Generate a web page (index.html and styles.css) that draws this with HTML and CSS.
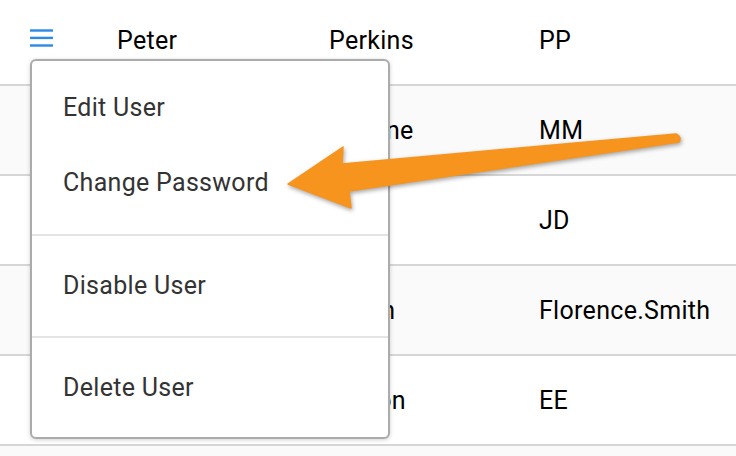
FILE: index.html
```html
<!DOCTYPE html>
<html>
<head>
<meta charset="utf-8">
<link rel="stylesheet" href="styles.css">
</head>
<body>
<div class="page">
  <div class="table">
    <div class="row">
      <div class="cell icon-cell">
        <svg class="hamburger" width="23" height="20" viewBox="0 0 23 20">
          <rect x="0" y="0.3" width="23" height="2.4" fill="#2b8ae6"/>
          <rect x="0" y="7.7" width="23" height="2.4" fill="#2b8ae6"/>
          <rect x="0" y="15.3" width="23" height="2.4" fill="#2b8ae6"/>
        </svg>
      </div>
      <div class="cell">Peter</div>
      <div class="cell">Perkins</div>
      <div class="cell">PP</div>
    </div>
    <div class="row alt">
      <div class="cell icon-cell"></div>
      <div class="cell"></div>
      <div class="cell">Malone</div>
      <div class="cell">MM</div>
    </div>
    <div class="row">
      <div class="cell icon-cell"></div>
      <div class="cell"></div>
      <div class="cell">Doe</div>
      <div class="cell">JD</div>
    </div>
    <div class="row alt">
      <div class="cell icon-cell"></div>
      <div class="cell"></div>
      <div class="cell">Smith</div>
      <div class="cell">Florence.Smith</div>
    </div>
    <div class="row">
      <div class="cell icon-cell"></div>
      <div class="cell"></div>
      <div class="cell">Edison</div>
      <div class="cell">EE</div>
    </div>
    <div class="row alt">
      <div class="cell icon-cell"></div>
      <div class="cell"></div>
      <div class="cell"></div>
      <div class="cell"></div>
    </div>
  </div>

  <div class="menu">
    <div class="menu-group first">
      <div class="menu-item">Edit User</div>
      <div class="menu-item">Change Password</div>
    </div>
    <div class="menu-group">
      <div class="menu-item">Disable User</div>
    </div>
    <div class="menu-group last">
      <div class="menu-item">Delete User</div>
    </div>
  </div>

  <svg class="arrow" width="736" height="456" viewBox="0 0 736 456">
    <path d="M288,184 L343,147 L342,164 L676,134 Q682,137 679,142 L349,191 L351,208 Z" fill="#f7941e" stroke="#f7941e" stroke-width="1.5" stroke-linejoin="round"/>
  </svg>
</div>
</body>
</html>
```

FILE: styles.css
```css
* { box-sizing: border-box; }

html, body {
  margin: 0;
  padding: 0;
  background: #ffffff;
}

body {
  font-family: Roboto, "Liberation Sans", sans-serif;
  width: 736px;
  height: 456px;
  overflow: hidden;
}

.page {
  position: relative;
  width: 736px;
  height: 456px;
  overflow: hidden;
}

.table {
  margin-top: -4px;
}

.row {
  display: grid;
  grid-template-columns: 87px 212px 210px 1fr;
  padding-left: 30px;
  height: 90px;
  align-items: center;
  border-bottom: 2px solid #d6d6d6;
  background: #ffffff;
  font-size: 25px;
  letter-spacing: 0.3px;
  color: #000000;
}

.row.alt {
  background: #fafafa;
}

.cell {
  white-space: nowrap;
}

.icon-cell {
  display: flex;
  align-items: center;
}

.hamburger {
  display: block;
  margin-top: -2px;
}

.menu {
  position: absolute;
  left: 30px;
  top: 59px;
  width: 360px;
  height: 380px;
  background: #ffffff;
  border: 2px solid #ababab;
  border-radius: 6px;
  box-shadow: 0 1px 4px rgba(0, 0, 0, 0.18);
  display: flex;
  flex-direction: column;
}

.menu-group {
  padding: 12px 0 13px;
  border-bottom: 2px solid #e4e4e4;
}

.menu-group.first {
  padding: 9px 0 14px;
}

.menu-group.last {
  padding: 12px 0 12px;
  border-bottom: none;
}

.menu-item {
  height: 75px;
  display: flex;
  align-items: center;
  padding-left: 31px;
  font-size: 25px;
  letter-spacing: 0.3px;
  color: #333333;
}

.arrow {
  position: absolute;
  left: 0;
  top: 0;
  pointer-events: none;
  filter: drop-shadow(1px 2px 2px rgba(0, 0, 0, 0.35));
}
```
